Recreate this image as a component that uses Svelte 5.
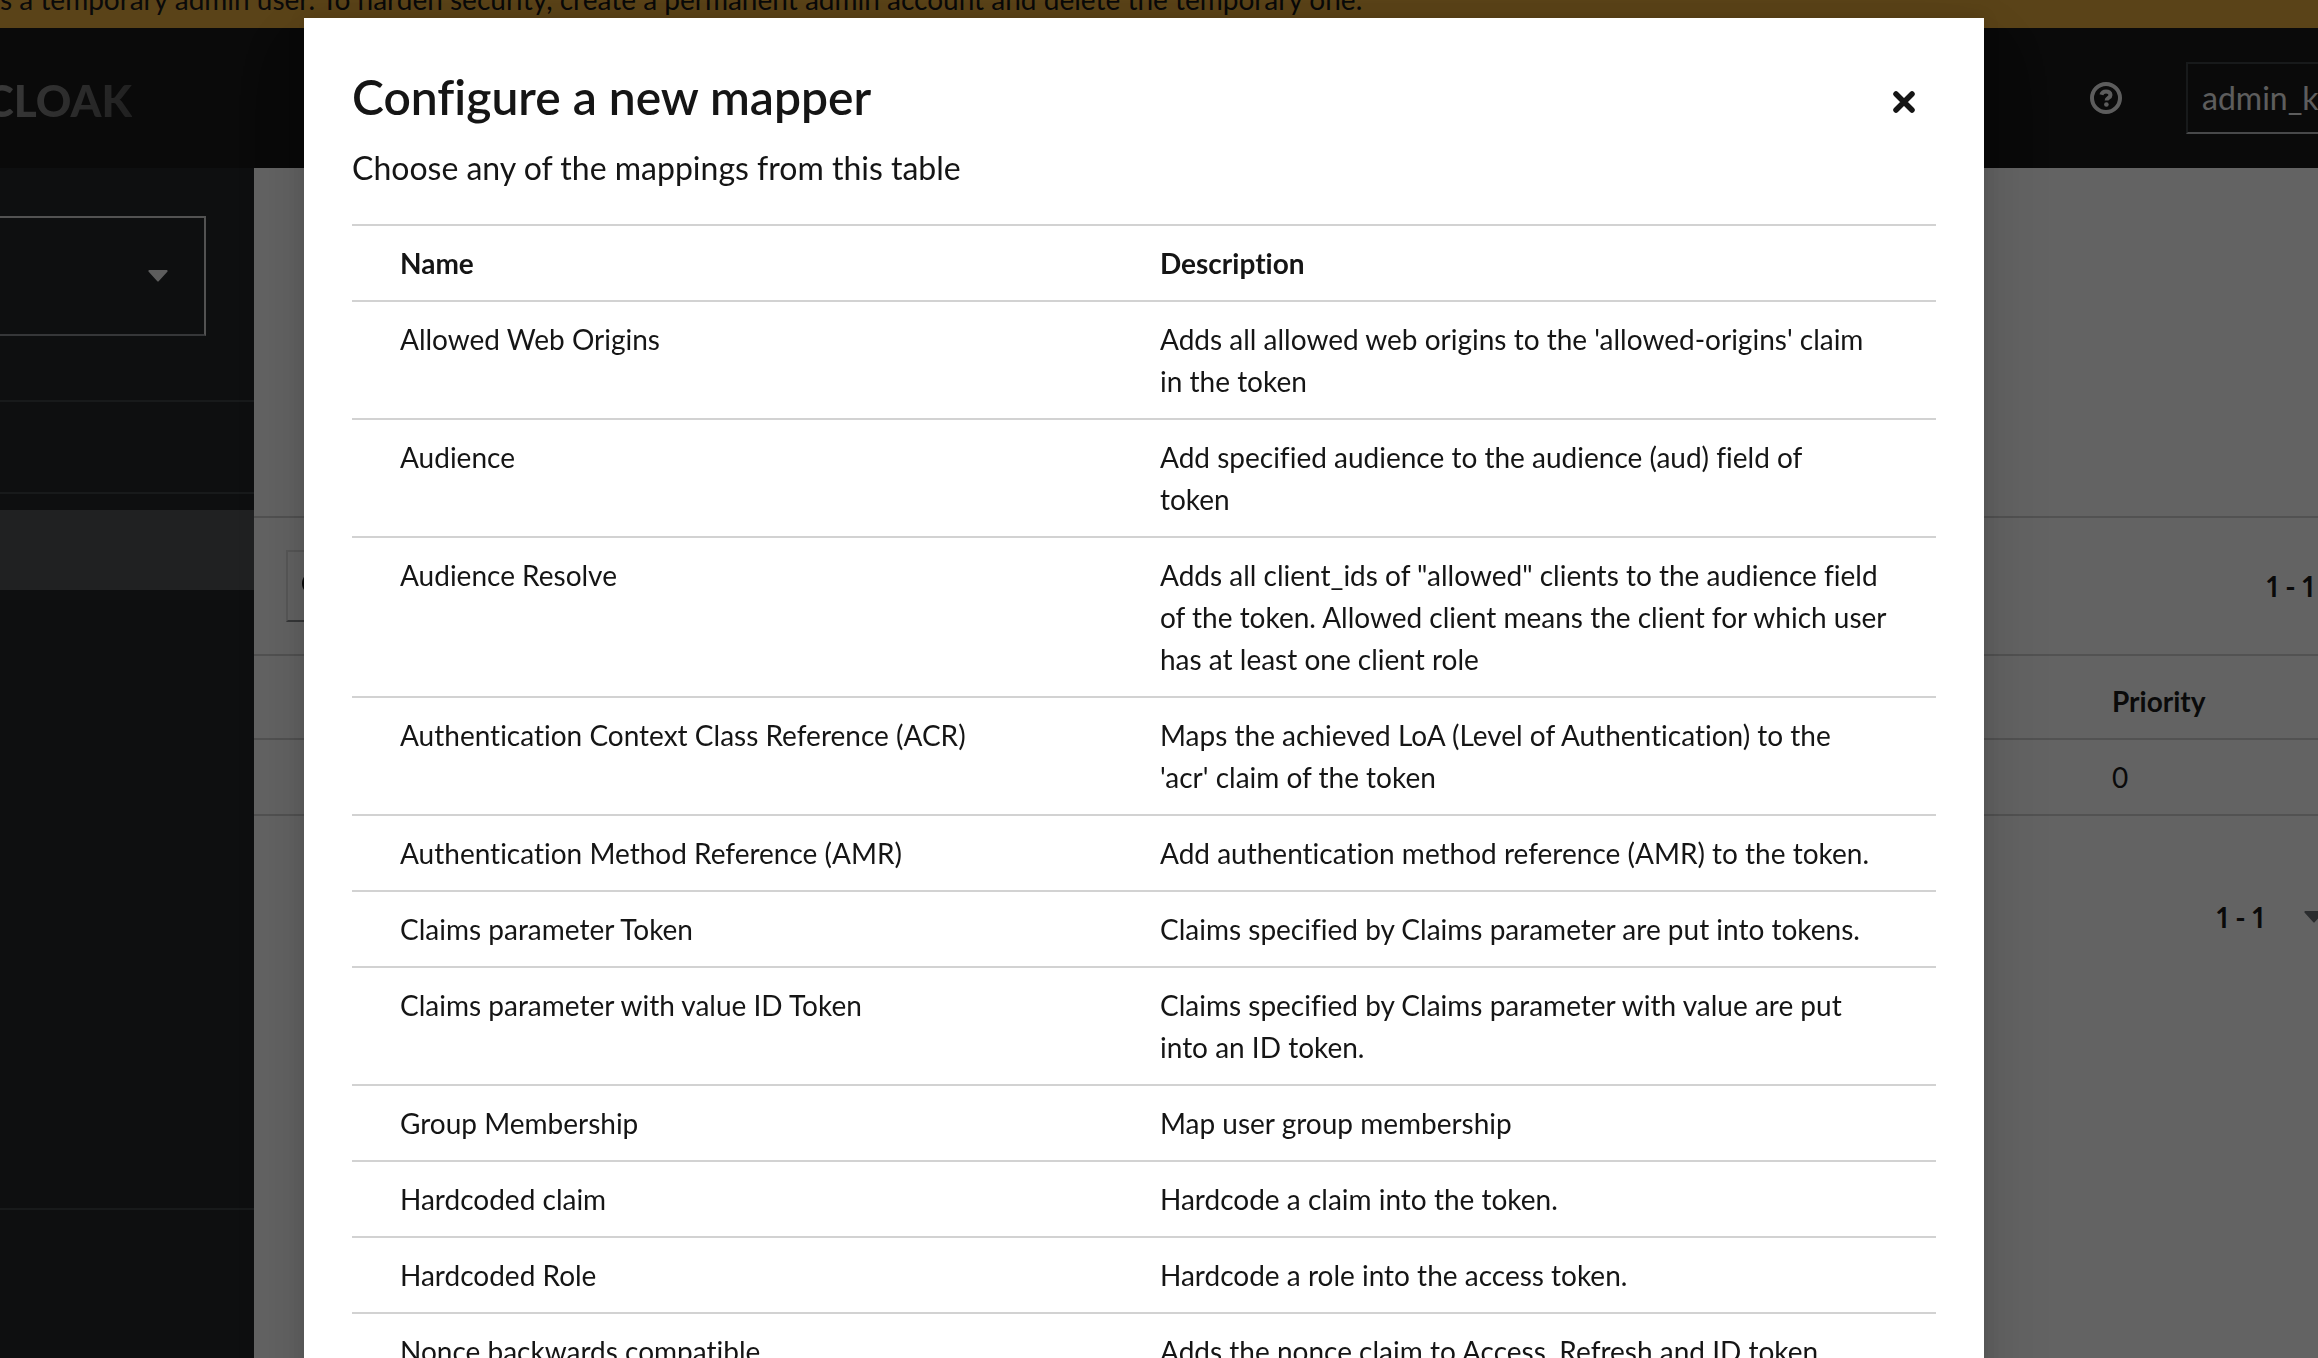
<script>
  let open = $state(true);
  let search = $state('');

  const mappers = [
    { name: 'Allowed Web Origins', description: "Adds all allowed web origins to the 'allowed-origins' claim\nin the token" },
    { name: 'Audience', description: 'Add specified audience to the audience (aud) field of\ntoken' },
    { name: 'Audience Resolve', description: 'Adds all client_ids of "allowed" clients to the audience field\nof the token. Allowed client means the client for which user\nhas at least one client role' },
    { name: 'Authentication Context Class Reference (ACR)', description: "Maps the achieved LoA (Level of Authentication) to the\n'acr' claim of the token" },
    { name: 'Authentication Method Reference (AMR)', description: 'Add authentication method reference (AMR) to the token.' },
    { name: 'Claims parameter Token', description: 'Claims specified by Claims parameter are put into tokens.' },
    { name: 'Claims parameter with value ID Token', description: 'Claims specified by Claims parameter with value are put\ninto an ID token.' },
    { name: 'Group Membership', description: 'Map user group membership' },
    { name: 'Hardcoded claim', description: 'Hardcode a claim into the token.' },
    { name: 'Hardcoded Role', description: 'Hardcode a role into the access token.' },
    { name: 'Nonce backwards compatible', description: 'Adds the nonce claim to Access, Refresh and ID token' }
  ];
</script>

{#snippet caret()}
  <svg class="caret" viewBox="0 0 20 12" aria-hidden="true">
    <path d="M1.5 0h17c1 0 1.5 1.1.8 1.8l-8.4 9.2a1.2 1.2 0 0 1-1.8 0L.7 1.8C0 1.1.5 0 1.5 0z" fill="currentColor" />
  </svg>
{/snippet}

<div class="page">
  <div class="banner">s a temporary admin user. To harden security, create a permanent admin account and delete the temporary one.</div>

  <header class="masthead">
    <div class="brand"><span>CLOAK</span></div>
    <div class="tools">
      <button class="help" aria-label="Help">
        <svg viewBox="0 0 32 32" aria-hidden="true">
          <circle cx="16" cy="16" r="14" fill="none" stroke="currentColor" stroke-width="4" />
          <path d="M11.4 12.8c.6-2.3 2.2-3.4 4.6-3.400 2.700 0 4.500 1.400 4.500 3.500 0 3.100-3.900 2.900-3.900 5.500" fill="none" stroke="currentColor" stroke-width="4" />
          <circle cx="16.400" cy="22.500" r="2.300" fill="currentColor" />
        </svg>
      </button>
      <button class="user">admin_k</button>
    </div>
  </header>

  <div class="body">
    <nav class="sidebar">
      <div class="realm">
        <button class="realm-toggle" aria-label="Select realm">{@render caret()}</button>
      </div>
      <div class="nav-heading"></div>
      <div class="nav-items">
        <div class="nav-active"></div>
      </div>
    </nav>

    <main class="content">
      <div class="intro"></div>
      <div class="toolbar">
        <label class="search">
          <svg viewBox="0 0 28 28" aria-hidden="true">
            <circle cx="11.500" cy="11.500" r="9.500" fill="none" stroke="currentColor" stroke-width="4" />
            <path d="M18.500 18.500l7.500 7.500" stroke="currentColor" stroke-width="4" stroke-linecap="round" />
          </svg>
          <input type="text" aria-label="Search for mapper" bind:value={search} />
        </label>
        <b>1 - 1</b>
      </div>
      <table class="list">
        <thead>
          <tr><th>Priority</th></tr>
        </thead>
        <tbody>
          <tr><td>0</td></tr>
        </tbody>
      </table>
      <div class="pager">
        <button class="pager-toggle"><b>1 - 1</b>{@render caret()}</button>
      </div>
    </main>
  </div>
</div>

{#if open}
  <div class="backdrop">
    <div class="modal" role="dialog" aria-modal="true" aria-labelledby="modal-title">
      <header class="modal-header">
        <div>
          <h1 id="modal-title">Configure a new mapper</h1>
          <p>Choose any of the mappings from this table</p>
        </div>
        <button class="close" aria-label="Close" onclick={() => (open = false)}>
          <svg viewBox="0 0 24 24" aria-hidden="true">
            <path d="M4 4l16 16M20 4L4 20" stroke="currentColor" stroke-width="5.500" stroke-linecap="round" />
          </svg>
        </button>
      </header>
      <table class="mappers">
        <thead>
          <tr><th>Name</th><th>Description</th></tr>
        </thead>
        <tbody>
          {#each mappers as mapper}
            <tr>
              <td>{mapper.name}</td>
              <td>{mapper.description}</td>
            </tr>
          {/each}
        </tbody>
      </table>
    </div>
  </div>
{/if}

<style>
  :global(body) {
    font-family: Lato, "Liberation Sans", sans-serif;
    font-size: 28px;
    line-height: 42px;
    font-variant-ligatures: none;
    color: #151515;
  }

  * { box-sizing: border-box; }
  button { font: inherit; color: inherit; background: none; border: none; padding: 0; cursor: pointer; }
  svg { display: block; }
  table { width: 100%; border-collapse: separate; border-spacing: 0; table-layout: fixed; }
  th { text-align: left; font-weight: 700; }
  th, td { padding: 16px; vertical-align: top; border-bottom: 2px solid #d2d2d2; }

  .page { display: flex; flex-direction: column; height: 100vh; overflow: hidden; }
  .caret { width: 20px; height: 12px; flex: none; }

  .banner {
    display: flex;
    align-items: flex-end;
    flex: none;
    height: 28px;
    padding-bottom: 8px;
    overflow: hidden;
    white-space: nowrap;
    background: #e8ab3b;
  }

  .masthead {
    display: flex;
    align-items: center;
    justify-content: space-between;
    flex: none;
    height: 140px;
    background: #151515;
    color: #f0f0f0;
  }
  .brand {
    display: flex;
    justify-content: flex-end;
    width: 132px;
    padding-top: 4px;
    overflow: hidden;
    font-size: 44px;
    font-weight: 900;
    line-height: 56px;
  }
  .brand span {
    background: linear-gradient(100deg, #999, #505050);
    background-clip: text;
    color: transparent;
  }
  .tools { display: flex; align-items: center; gap: 64px; }
  .help svg { width: 32px; height: 32px; }
  .user {
    width: 132px;
    height: 72px;
    padding-left: 14px;
    overflow: hidden;
    text-align: left;
    font-size: 32px;
    border: 2px solid #3c3f42;
    border-right: none;
    border-bottom-color: #b8bbbe;
  }

  .body { display: flex; flex: 1; min-height: 0; }

  .sidebar { flex: none; width: 254px; background: #212427; }
  .realm { padding: 48px 48px 64px 0; }
  .realm-toggle {
    display: flex;
    align-items: center;
    justify-content: flex-end;
    width: 100%;
    height: 120px;
    padding-right: 36px;
    color: #f0f0f0;
    border: 2px solid #d2d2d2;
    border-left: none;
    border-bottom-color: #8a8d90;
  }
  .nav-heading { height: 94px; border: solid #3c3f42; border-width: 2px 0; }
  .nav-items { height: 716px; padding-top: 16px; border-bottom: 2px solid #3c3f42; }
  .nav-active { height: 80px; background: #4f5255; }

  .content { flex: 1; min-width: 0; background: #fff; }
  .intro { height: 350px; border-bottom: 2px solid #d2d2d2; }
  .toolbar {
    display: flex;
    align-items: center;
    justify-content: space-between;
    height: 138px;
    padding: 0 4px 0 32px;
    border-bottom: 2px solid #d2d2d2;
  }
  .search {
    display: flex;
    align-items: center;
    gap: 16px;
    width: 400px;
    height: 72px;
    padding: 0 14px;
    border: 2px solid #e0e0e0;
    border-bottom-color: #8a8d90;
  }
  .search svg { width: 28px; height: 28px; flex: none; }
  .search input { flex: 1; min-width: 0; font: inherit; border: none; outline: none; }
  b { font-variant-numeric: proportional-nums; word-spacing: normal; }

  .list th, .list td { padding-left: calc(100% - 206px); }
  .list th { padding-top: 24px; }

  .pager { display: flex; justify-content: flex-end; padding-top: 80px; }
  .pager-toggle { display: flex; align-items: center; gap: 40px; margin-right: -6px; }
  .pager-toggle .caret { color: #6a6e73; }

  .backdrop {
    position: fixed;
    inset: 0;
    display: flex;
    justify-content: center;
    align-items: flex-start;
    padding: 18px 30px 0 0;
    overflow: hidden;
    background: rgba(3, 3, 3, 0.62);
  }
  .modal {
    width: 1680px;
    max-width: 100%;
    padding: 48px;
    background: #fff;
    box-shadow: 0 32px 64px rgba(3, 3, 3, 0.16), 0 0 16px rgba(3, 3, 3, 0.1);
  }
  .modal-header { display: flex; align-items: flex-start; justify-content: space-between; padding-bottom: 32px; }
  h1 { margin: 0 0 16px; font-size: 48px; line-height: 62px; font-weight: 600; }
  p { margin: 0; font-size: 32px; line-height: 48px; }
  .close { display: flex; padding: 24px 20px; }
  .close svg { width: 24px; height: 24px; }

  .mappers { border-top: 2px solid #d2d2d2; }
  .mappers td { white-space: pre-line; }
  .mappers th:first-child, .mappers td:first-child { padding-left: 48px; }
  .mappers th:last-child, .mappers td:last-child { padding-right: 40px; }
</style>
